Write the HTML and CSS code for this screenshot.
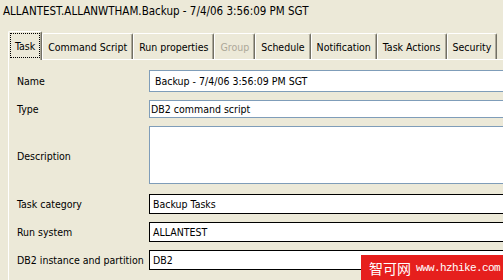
FILE: index.html
```html
<!doctype html>
<html lang="en">
    <head>
        <meta charset="UTF-8" />
        <meta name="viewport" content="width=device-width, initial-scale=1.0" />
        <title>ALLANTEST.ALLANWTHAM.Backup</title>
        <link rel="stylesheet" href="styles.css">
    </head>
    <body>
        <div class="window">
            <div class="title">ALLANTEST.ALLANWTHAM.Backup - 7/4/06 3:56:09 PM SGT</div>

            <div class="tabs">
                <div class="tab tab-active"><span class="focus">Task</span></div>
                <div class="tab">Command Script</div>
                <div class="tab">Run properties</div>
                <div class="tab tab-disabled">Group</div>
                <div class="tab">Schedule</div>
                <div class="tab">Notification</div>
                <div class="tab">Task Actions</div>
                <div class="tab">Security</div>
            </div>

            <div class="panel">
                <div class="form">
                    <div class="label">Name</div>
                    <div class="field field-name">Backup - 7/4/06 3:56:09 PM SGT</div>

                    <div class="label">Type</div>
                    <div class="field field-type">DB2 command script</div>

                    <div class="label">Description</div>
                    <div class="field field-desc"></div>

                    <div class="label">Task category</div>
                    <div class="field field-dark">Backup Tasks</div>

                    <div class="label">Run system</div>
                    <div class="field field-dark">ALLANTEST</div>

                    <div class="label">DB2 instance and partition</div>
                    <div class="field field-dark">DB2</div>
                </div>
            </div>
        </div>

        <div class="watermark">
            <span class="wm-cn">智可网</span>
            <span class="wm-url">www.hzhike.com</span>
        </div>
    </body>
</html>
```

FILE: styles.css
```css
* {
    margin: 0;
    padding: 0;
    box-sizing: border-box;
}
html,
body {
    height: 100%;
    overflow: hidden;
}
body {
    font-family: "DejaVu Sans Condensed", "DejaVu Sans", sans-serif;
    font-stretch: condensed;
    font-size: 10.5px;
    background-color: #ece9d8;
    color: #000000;
    position: relative;
}
.title {
    height: 31px;
    line-height: 22px;
    padding-left: 3px;
    font-size: 11.5px;
    white-space: nowrap;
}
.tabs {
    display: flex;
    align-items: flex-end;
    height: 28px;
    margin-left: 8px;
    position: relative;
    z-index: 1;
}
.tab {
    height: 26px;
    display: flex;
    align-items: center;
    padding: 0 5px;
    border: 1px solid;
    border-color: #ffffff #716f64 transparent #ffffff;
    border-bottom: none;
    border-radius: 2px 2px 0 0;
    box-shadow: inset -1px 0 #aca899;
    white-space: nowrap;
}
.tab-active {
    height: 29px;
    margin-bottom: -1px;
    padding: 1px 1px 2px 1px;
    background-color: #ece9d8;
}
.focus {
    display: flex;
    align-items: center;
    height: 100%;
    padding: 0 4px;
    border: 1px dotted #000000;
}
.tab-disabled {
    color: #aca899;
}
.panel {
    margin-left: 8px;
    border-top: 1px solid #ffffff;
    border-left: 1px solid #ffffff;
    height: 300px;
}
.form {
    display: grid;
    grid-template-columns: 132px 600px;
    row-gap: 8px;
    padding: 10px 0 0 8px;
}
.label {
    align-self: center;
    white-space: nowrap;
}
.field {
    height: 20px;
    display: flex;
    align-items: center;
    padding-left: 5px;
    background-color: #ffffff;
    border: 1px solid #7f9db9;
    white-space: nowrap;
}
.field-name {
    height: 22px;
}
.field-type {
    height: 18px;
    padding-left: 1px;
}
.field-desc {
    height: 58px;
    margin-bottom: 2px;
}
.field-dark {
    border-color: #000000;
    padding-left: 3px;
}
.watermark {
    position: absolute;
    right: 0;
    bottom: 0;
    width: 142px;
    height: 25px;
    display: flex;
    align-items: center;
    gap: 5px;
    padding-left: 8px;
    background-color: #e61f1d;
    color: #ffffff;
    white-space: nowrap;
}
.wm-cn {
    flex-shrink: 0;
    font-family: "Noto Sans CJK SC", sans-serif;
    font-size: 14px;
    font-stretch: normal;
}
.wm-url {
    flex-shrink: 0;
    font-family: "Liberation Mono", monospace;
    font-size: 11px;
    letter-spacing: -0.6px;
}
```
